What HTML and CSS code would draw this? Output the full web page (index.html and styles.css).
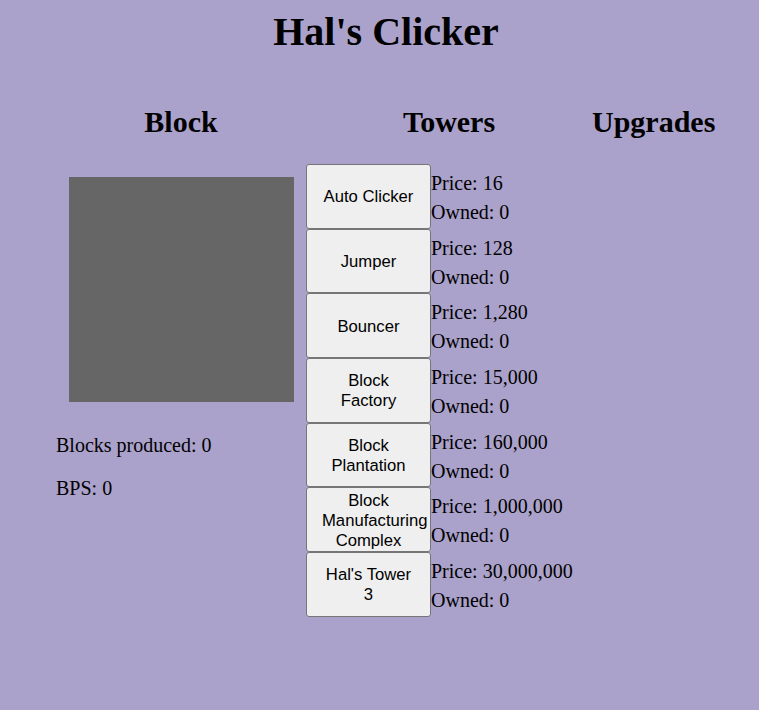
FILE: index.html
```html
<!DOCTYPE html>
<html lang="en">
<head>
    <meta charset="UTF-8">
    <meta name="viewport" content="width=device-width, initial-scale=1.0">
    <title>Hal's Clicker</title>
    <link rel="stylesheet" href="styles.css">
</head>
<body>
    <h1>Hal's Clicker</h1>

    <div class="game">
        <!-- Block column -->
        <div class="col col-block">
            <h2>Block</h2>
            <div id="block" class="block"></div>
            <p>Blocks produced: <span id="blocks">0</span></p>
            <p>BPS: <span id="bps">0</span></p>
        </div>

        <!-- Towers column -->
        <div class="col col-towers">
            <h2>Towers</h2>
            <div class="tower">
                <button>Auto Clicker</button>
                <div class="info">
                    <div>Price: 16</div>
                    <div>Owned: 0</div>
                </div>
            </div>
            <div class="tower">
                <button>Jumper</button>
                <div class="info">
                    <div>Price: 128</div>
                    <div>Owned: 0</div>
                </div>
            </div>
            <div class="tower">
                <button>Bouncer</button>
                <div class="info">
                    <div>Price: 1,280</div>
                    <div>Owned: 0</div>
                </div>
            </div>
            <div class="tower">
                <button>Block Factory</button>
                <div class="info">
                    <div>Price: 15,000</div>
                    <div>Owned: 0</div>
                </div>
            </div>
            <div class="tower">
                <button>Block Plantation</button>
                <div class="info">
                    <div>Price: 160,000</div>
                    <div>Owned: 0</div>
                </div>
            </div>
            <div class="tower">
                <button>Block Manufacturing Complex</button>
                <div class="info">
                    <div>Price: 1,000,000</div>
                    <div>Owned: 0</div>
                </div>
            </div>
            <div class="tower">
                <button>Hal's Tower 3</button>
                <div class="info">
                    <div>Price: 30,000,000</div>
                    <div>Owned: 0</div>
                </div>
            </div>
        </div>

        <!-- Upgrades column -->
        <div class="col col-upgrades">
            <h2>Upgrades</h2>
        </div>
    </div>
</body>
</html>
```

FILE: styles.css
```css
body {
    font-family: "Liberation Serif", "Times New Roman", serif;
    font-size: 20px;
    background-color: #aba2cb;
    color: #000;
    margin: 0;
}

h1 {
    font-size: 40px;
    text-align: center;
    margin: 8px 0 27px;
    padding-left: 13px;
}

h2 {
    font-size: 30px;
    text-align: center;
    margin: 23px 0 25px;
}

.game {
    display: flex;
    align-items: flex-start;
    padding-left: 56px;
}

.col-block {
    width: 250px;
}

.col-towers {
    width: 286px;
}

.block {
    width: 225px;
    height: 225px;
    background-color: #666666;
    margin: 38px auto 32px;
}

.col-block p {
    margin: 20px 0;
}

.tower {
    display: flex;
    height: 64.7px;
}

.tower button {
    width: 125px;
    height: 64.7px;
    font-family: "Liberation Sans", Arial, sans-serif;
    font-size: 16.67px;
    color: #000;
    background-color: #efefef;
    border: 1px solid #767676;
    border-radius: 3px;
    padding: 2px 15px 0;
    flex-shrink: 0;
}

.info {
    padding-top: 5px;
    line-height: 29px;
    white-space: nowrap;
}
```
